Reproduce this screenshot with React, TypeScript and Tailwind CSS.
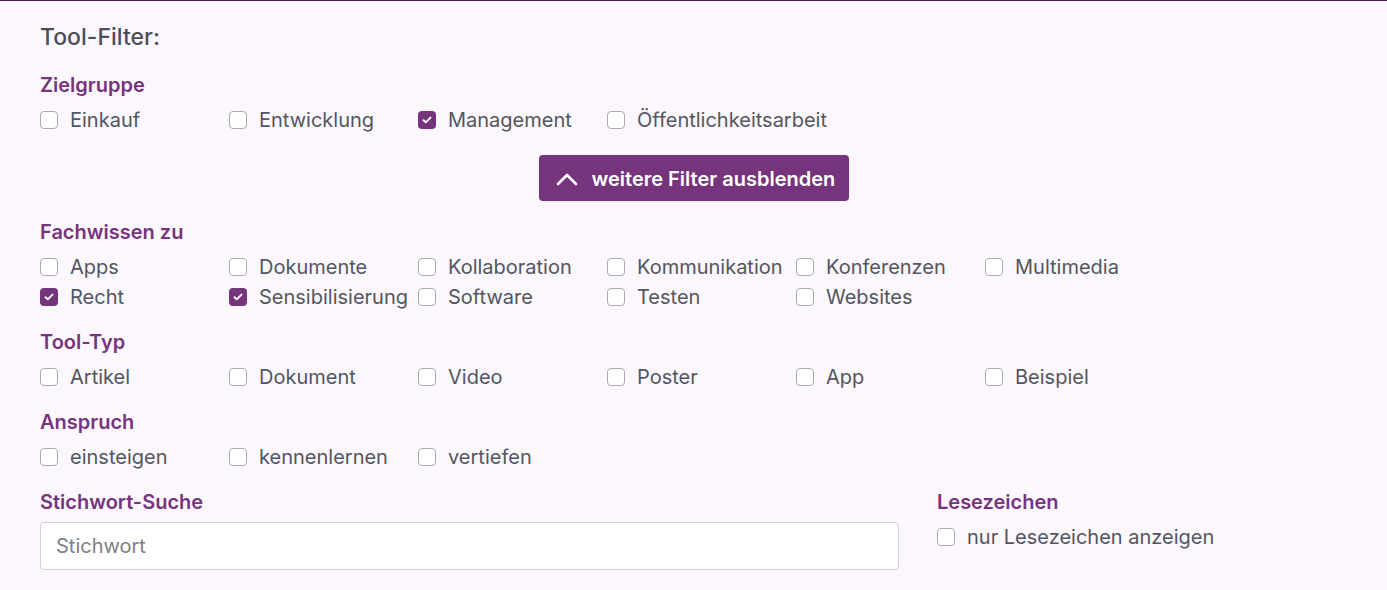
import React from "react";

const Check = ({ checked }: { checked?: boolean }) =>
  checked ? (
    <span className="flex h-[18px] w-[18px] shrink-0 items-center justify-center rounded-[4px] bg-[#76347c]">
      <svg width="10" height="8" viewBox="0 0 10 8" fill="none">
        <path d="M1.5 4.2 L3.8 6.3 L8.5 1.6" stroke="white" strokeWidth="1.9" strokeLinecap="round" strokeLinejoin="round" />
      </svg>
    </span>
  ) : (
    <span className="h-[18px] w-[18px] shrink-0 rounded-[4px] border border-[#a7abb3] bg-white" />
  );

const Item = ({ label, checked }: { label: string; checked?: boolean }) => (
  <label className="flex h-[30px] w-[189px] items-center gap-3 whitespace-nowrap">
    <Check checked={checked} />
    <span className="text-[20px] leading-none text-[#52565e]">{label}</span>
  </label>
);

const Heading = ({ children }: { children: React.ReactNode }) => (
  <h3 className="h-6 text-[20px] font-semibold leading-6 text-[#76347c]">{children}</h3>
);

const Group = ({ title, items, className = "" }: { title: string; items: [string, boolean?][]; className?: string }) => (
  <div className={className}>
    <Heading>{title}</Heading>
    <div className="mt-2 flex flex-wrap">
      {items.map(([l, c]) => (
        <Item key={l} label={l} checked={c} />
      ))}
    </div>
  </div>
);

export default function App() {
  return (
    <div
      className="min-h-[590px] border-t border-[#4a1a55] bg-[#fcf7fd] px-10 pt-[22px]"
      style={{ fontFamily: "Inter, 'Noto Sans', sans-serif" }}
    >
      <h2 className="h-7 text-[23px] font-medium leading-7 text-[#4b4f57]">Tool-Filter:</h2>
      <Group
        className="mt-[22px]"
        title="Zielgruppe"
        items={[["Einkauf"], ["Entwicklung"], ["Management", true], ["Öffentlichkeitsarbeit"]]}
      />
      <div className="mt-5 flex justify-center">
        <button className="flex h-[46px] w-[310px] items-center gap-[14px] rounded-[4px] bg-[#76347c] pl-[17px] pt-[2px] text-[20px] font-semibold text-white">
          <svg width="22" height="14" viewBox="0 0 22 14" fill="none">
            <path d="M2 12 L11 3 L20 12" stroke="white" strokeWidth="2.6" strokeLinecap="round" strokeLinejoin="round" />
          </svg>
          weitere Filter ausblenden
        </button>
      </div>
      <Group
        className="mt-[19px] w-[1200px]"
        title="Fachwissen zu"
        items={[
          ["Apps"],
          ["Dokumente"],
          ["Kollaboration"],
          ["Kommunikation"],
          ["Konferenzen"],
          ["Multimedia"],
          ["Recht", true],
          ["Sensibilisierung", true],
          ["Software"],
          ["Testen"],
          ["Websites"],
        ]}
      />
      <Group
        className="mt-[18px]"
        title="Tool-Typ"
        items={[["Artikel"], ["Dokument"], ["Video"], ["Poster"], ["App"], ["Beispiel"]]}
      />
      <Group className="mt-[18px]" title="Anspruch" items={[["einsteigen"], ["kennenlernen"], ["vertiefen"]]} />
      <div className="mt-[18px] flex">
        <div className="w-[859px]">
          <Heading>Stichwort-Suche</Heading>
          <input
            className="mt-2 h-[48px] w-full rounded-[4px] border border-[#cfd1d8] bg-white px-[15px] text-[20px] text-[#52565e] placeholder:text-[#7d8189] outline-none"
            placeholder="Stichwort"
          />
        </div>
        <div className="ml-[38px]">
          <Heading>Lesezeichen</Heading>
          <div className="mt-2">
            <Item label="nur Lesezeichen anzeigen" />
          </div>
        </div>
      </div>
    </div>
  );
}
